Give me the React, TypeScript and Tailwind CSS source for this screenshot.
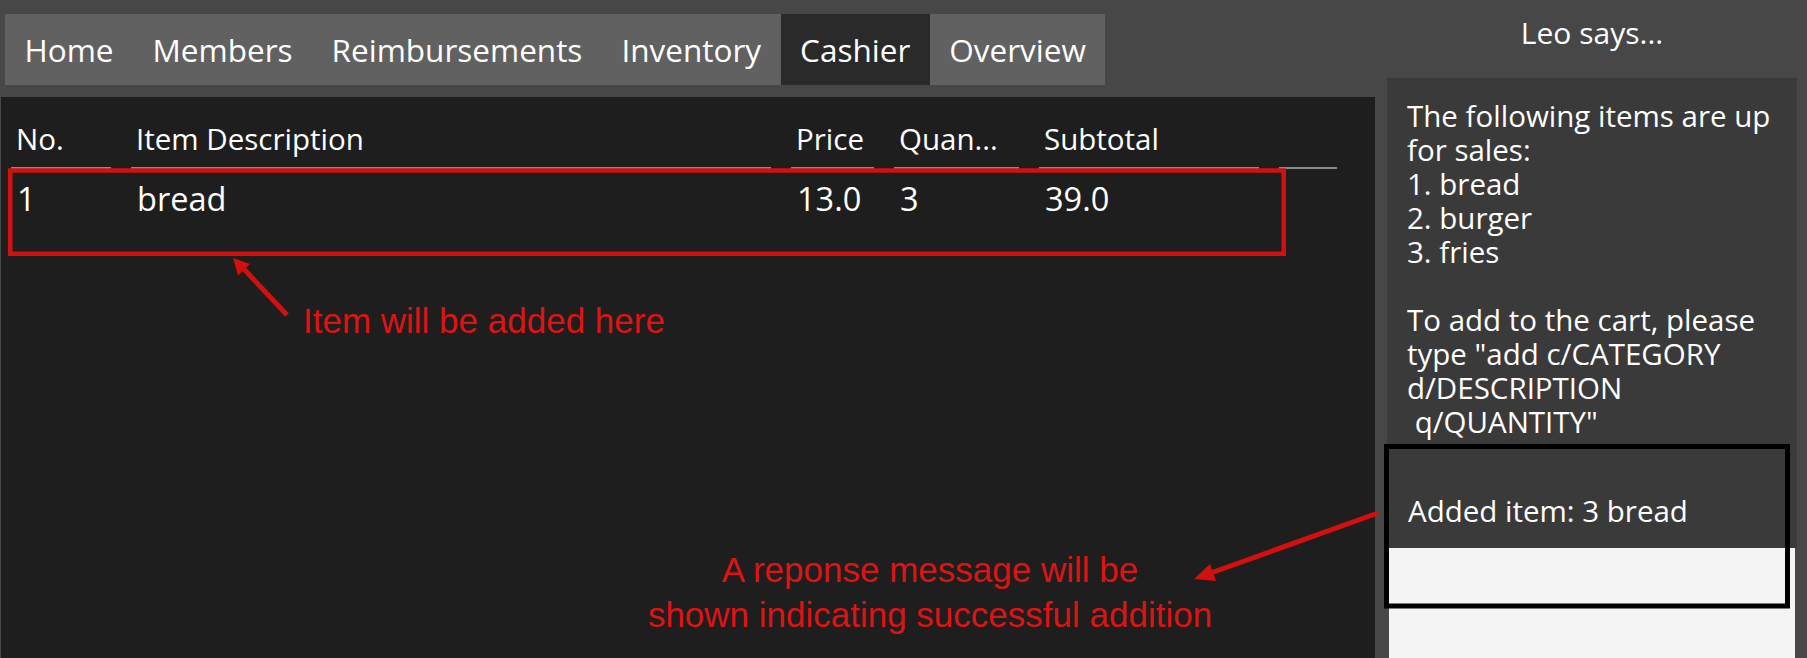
import React from "react";

const tabs = ["Home", "Members", "Reimbursements", "Inventory", "Cashier", "Overview"];

const columns = ["No.", "Item Description", "Price", "Quan...", "Subtotal", ""];

const items = [{ no: "1", description: "bread", price: "13.0", quantity: "3", subtotal: "39.0" }];

const leoMessage = [
  "The following items are up",
  "for sales:",
  "1. bread",
  "2. burger",
  "3. fries",
  "",
  "To add to the cart, please",
  'type "add c/CATEGORY',
  "d/DESCRIPTION",
  ' q/QUANTITY"',
].join("\n");

function TabBar() {
  return (
    <div className="ml-[4px] mt-[14px] flex h-[71px]">
      {tabs.map((tab) => (
        <div
          key={tab}
          className={
            tab === "Cashier"
              ? "flex items-center bg-[#2a2a2a] px-[19.5px] text-[31.5px] text-white"
              : "flex items-center bg-[#616161] px-[19.5px] text-[31.5px] text-white"
          }
        >
          {tab}
        </div>
      ))}
    </div>
  );
}

function CartTable() {
  return (
    <div className="mt-[12px] flex-1 bg-[#1e1e1e] pt-[22px]">
      <div className="ml-[10px] grid grid-cols-[100px_640px_83px_125px_220px_58px] gap-x-[20px] text-white">
        {columns.map((col, i) => (
          <div key={i} className="h-[50px] border-b-2 border-[#8c8c8c] pl-[5px] text-[29.5px] leading-[40px]">
            {col}
          </div>
        ))}
        {items.map((item) => (
          <React.Fragment key={item.no}>
            <div className="pl-[6px] pt-[10px] text-[32.5px] leading-[40px]">{item.no}</div>
            <div className="pl-[6px] pt-[10px] text-[32.5px] leading-[40px]">{item.description}</div>
            <div className="pl-[6px] pt-[10px] text-[32.5px] leading-[40px]">{item.price}</div>
            <div className="pl-[6px] pt-[10px] text-[32.5px] leading-[40px]">{item.quantity}</div>
            <div className="pl-[6px] pt-[10px] text-[32.5px] leading-[40px]">{item.subtotal}</div>
            <div />
          </React.Fragment>
        ))}
      </div>
    </div>
  );
}

function LeoPanel() {
  return (
    <div className="ml-[12px] flex w-[410px] flex-col">
      <div className="h-[78px] pt-[18px] text-center text-[30px] leading-[30px] text-white">Leo says...</div>
      <div className="flex h-[470px] flex-col bg-[#3a3a3a] text-[29.5px] leading-[34px] text-white">
        <div className="h-[368px] whitespace-pre pl-[20px] pt-[21px]">{leoMessage}</div>
        <div className="h-[102px] pl-[21px] pt-[48px]">Added item: 3 bread</div>
      </div>
      <div className="mx-[2px] flex-1 bg-[#f4f4f4]" />
    </div>
  );
}

// red/black markup drawn over the screenshot
function Annotations() {
  return (
    <div className="pointer-events-none absolute inset-0 font-['Liberation_Sans',Arial,sans-serif] text-[#dc1414]">
      <svg width="1807" height="658" className="absolute left-0 top-0">
        <rect x="10.25" y="170.5" width="1273.5" height="83.25" fill="none" stroke="#d21010" strokeWidth="4.5" />
        <line x1="287" y1="315" x2="242" y2="267" stroke="#d21010" strokeWidth="5" />
        <polygon points="233,258 250,264 238,275.5" fill="#d21010" />
        <line x1="1378" y1="513" x2="1208" y2="574" stroke="#d21010" strokeWidth="5" />
        <polygon points="1194,579 1216,581 1210,564" fill="#d21010" />
        <rect x="1386.5" y="446.5" width="401" height="159.5" fill="none" stroke="#000000" strokeWidth="5" />
      </svg>
      <div className="absolute left-[303px] top-[301px] text-[35px] leading-[40px]">Item will be added here</div>
      <div className="absolute left-[630px] top-[547px] w-[600px] text-center text-[35px] leading-[45px]">
        A reponse message will be
        <br />
        shown indicating successful addition
      </div>
    </div>
  );
}

export default function App() {
  return (
    <div className="relative flex h-[658px] w-[1807px] overflow-hidden bg-[#474747] font-['Open_Sans',sans-serif]">
      <div className="flex w-[1375px] flex-col pl-px">
        <TabBar />
        <CartTable />
      </div>
      <LeoPanel />
      <Annotations />
    </div>
  );
}
